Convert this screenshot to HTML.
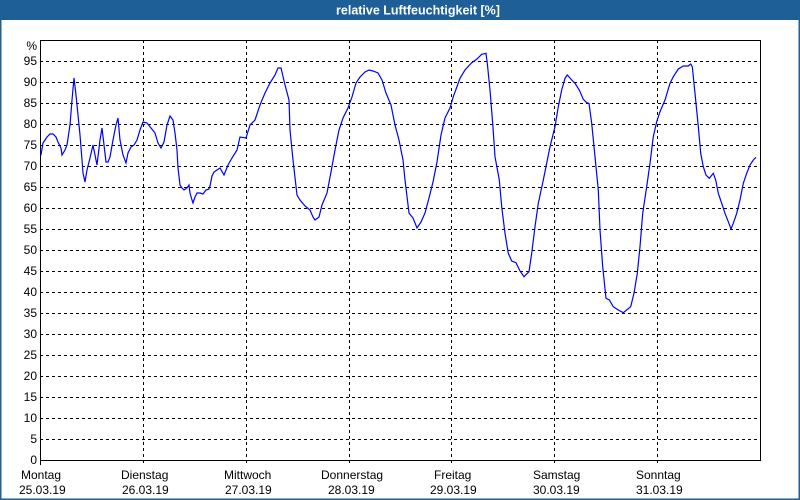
<!DOCTYPE html>
<html><head><meta charset="utf-8"><style>
html,body{margin:0;padding:0;width:800px;height:500px;overflow:hidden;background:#fff}
</style></head><body>
<svg width="800" height="500" xmlns="http://www.w3.org/2000/svg" font-family="'Liberation Sans',sans-serif">
<rect x="0" y="0" width="800" height="500" fill="#fff"/>
<rect x="0.5" y="0.5" width="799" height="499" fill="none" stroke="#1e5f98" stroke-width="2"/>
<rect x="0" y="0" width="800" height="20" fill="#1e5f98"/>
<text x="418" y="14.5" fill="#fff" font-size="12.5" font-weight="bold" text-anchor="middle">relative Luftfeuchtigkeit [%]</text>
<g stroke="#000" stroke-width="1" stroke-dasharray="3,3" fill="none">
<path d="M40 61.5H760M40 82.5H760M40 103.5H760M40 124.5H760M40 145.5H760M40 166.5H760M40 187.5H760M40 208.5H760M40 229.5H760M40 250.5H760M40 271.5H760M40 292.5H760M40 313.5H760M40 334.5H760M40 355.5H760M40 376.5H760M40 397.5H760M40 418.5H760M40 439.5H760"/>
<path d="M143.5 40V465M246.5 40V465M349.5 40V465M451.5 40V465M554.5 40V465M657.5 40V465"/>
</g>
<rect x="40.5" y="40.5" width="720" height="420" fill="none" stroke="#000"/>
<path d="M40.5 460V465" stroke="#000"/>
<g font-size="12" fill="#000" text-anchor="end">
<text x="37" y="50">%</text>
<text x="37" y="65">95</text><text x="37" y="86">90</text><text x="37" y="107">85</text><text x="37" y="128">80</text><text x="37" y="149">75</text><text x="37" y="170">70</text><text x="37" y="191">65</text><text x="37" y="212">60</text><text x="37" y="233">55</text><text x="37" y="254">50</text><text x="37" y="275">45</text><text x="37" y="296">40</text><text x="37" y="317">35</text><text x="37" y="338">30</text><text x="37" y="359">25</text><text x="37" y="380">20</text><text x="37" y="401">15</text><text x="37" y="422">10</text><text x="37" y="443">5</text><text x="37" y="464">0</text>
</g>
<g font-size="12" fill="#000">
<text x="21" y="479">Montag</text><text x="19" y="494">25.03.19</text>
<text x="121" y="479">Dienstag</text><text x="122" y="494">26.03.19</text>
<text x="224" y="479">Mittwoch</text><text x="225" y="494">27.03.19</text>
<text x="321" y="479">Donnerstag</text><text x="328" y="494">28.03.19</text>
<text x="434" y="479">Freitag</text><text x="430" y="494">29.03.19</text>
<text x="533" y="479">Samstag</text><text x="533" y="494">30.03.19</text>
<text x="636" y="479">Sonntag</text><text x="636" y="494">31.03.19</text>
</g>
<polyline fill="none" stroke="#0000ff" stroke-width="1.2" points="41,155 43,143 47,137 50,134 53,134 56,137 58,142 61,148 62,155 65,150 67,145 70,125 72,100 74,78 76,95 78,115 80,135 82,160 83,173 85,182 87,170 90,158 93,145 96,160 97,165 100,140 102,128 104,145 106,162 108,162 110,157 113,140 116,125 118,118 120,140 123,155 126,163 128,153 131,147 134,145 137,140 140,130 143,122 147,123 151,128 155,133 158,143 161,148 164,142 167,125 170,116 173,120 175,133 177,150 178,168 180,185 182,188 184,190 187,188 189,185 190,193 192,200 193,203 195,197 197,193 200,193 203,194 206,190 209,189 210,186 212,176 214,172 217,170 220,168 224,175 228,165 232,158 237,150 240,137 246,138 250,125 255,120 260,105 265,93 270,83 275,75 278,68 281,68 285,85 289,100 290,130 293,160 297,195 300,200 305,206 310,210 313,217 315,220 319,217 322,205 327,193 331,172 335,150 339,130 343,118 348,108 352,97 356,83 360,77 365,72 369,70 373,71 378,73 382,80 386,93 391,105 395,125 399,140 403,160 405,180 409,213 413,218 417,228 421,222 425,213 429,198 433,182 437,162 441,135 445,118 450,108 453.3,96.7 460,78.3 465,70 471.7,62.7 476.7,59.3 481.7,54.3 486,53.3 487.3,63.3 490,90 492.7,123.3 495,156.7 499.3,180 501.7,206.7 505,233.3 508.3,253.3 511.7,261 516,262.7 520,271 524,276.7 529,271.7 531.7,253.3 535,226.7 538.3,203.3 543.3,180 546.7,163.3 550,146.7 555,126.7 558.3,106.7 561.7,90 565,78.3 567.3,75 571.7,80 575,83.3 579.3,90 583.3,99.3 586.7,102.7 589,103.3 591.7,123.3 595,156.7 598.3,190 600,230 602.7,266.7 606,298.3 609.3,300 613.3,306.7 618.3,310 623.3,312.7 626.7,310 630.7,306.7 634,293.3 637.3,273.3 640,246.7 642.7,213.3 646.7,186.7 650,163.3 653.3,136.7 656.7,121.7 660,111.7 665,100 670,83.3 673.3,76.7 678.3,69 683.3,66 688.3,66 690.7,64 692.3,66.7 695,93.3 698.3,126.7 700.7,153.3 703.3,166.7 706,175 709.3,178.3 713.3,173.3 715.7,180 718.3,193.3 721.7,203.3 725,213.3 728.3,221.7 731,229 733.3,223.3 736.7,213.3 740,200 743.3,183.3 746.7,173.3 750,165 753.3,160 756,157.3"/>
</svg>
</body></html>
